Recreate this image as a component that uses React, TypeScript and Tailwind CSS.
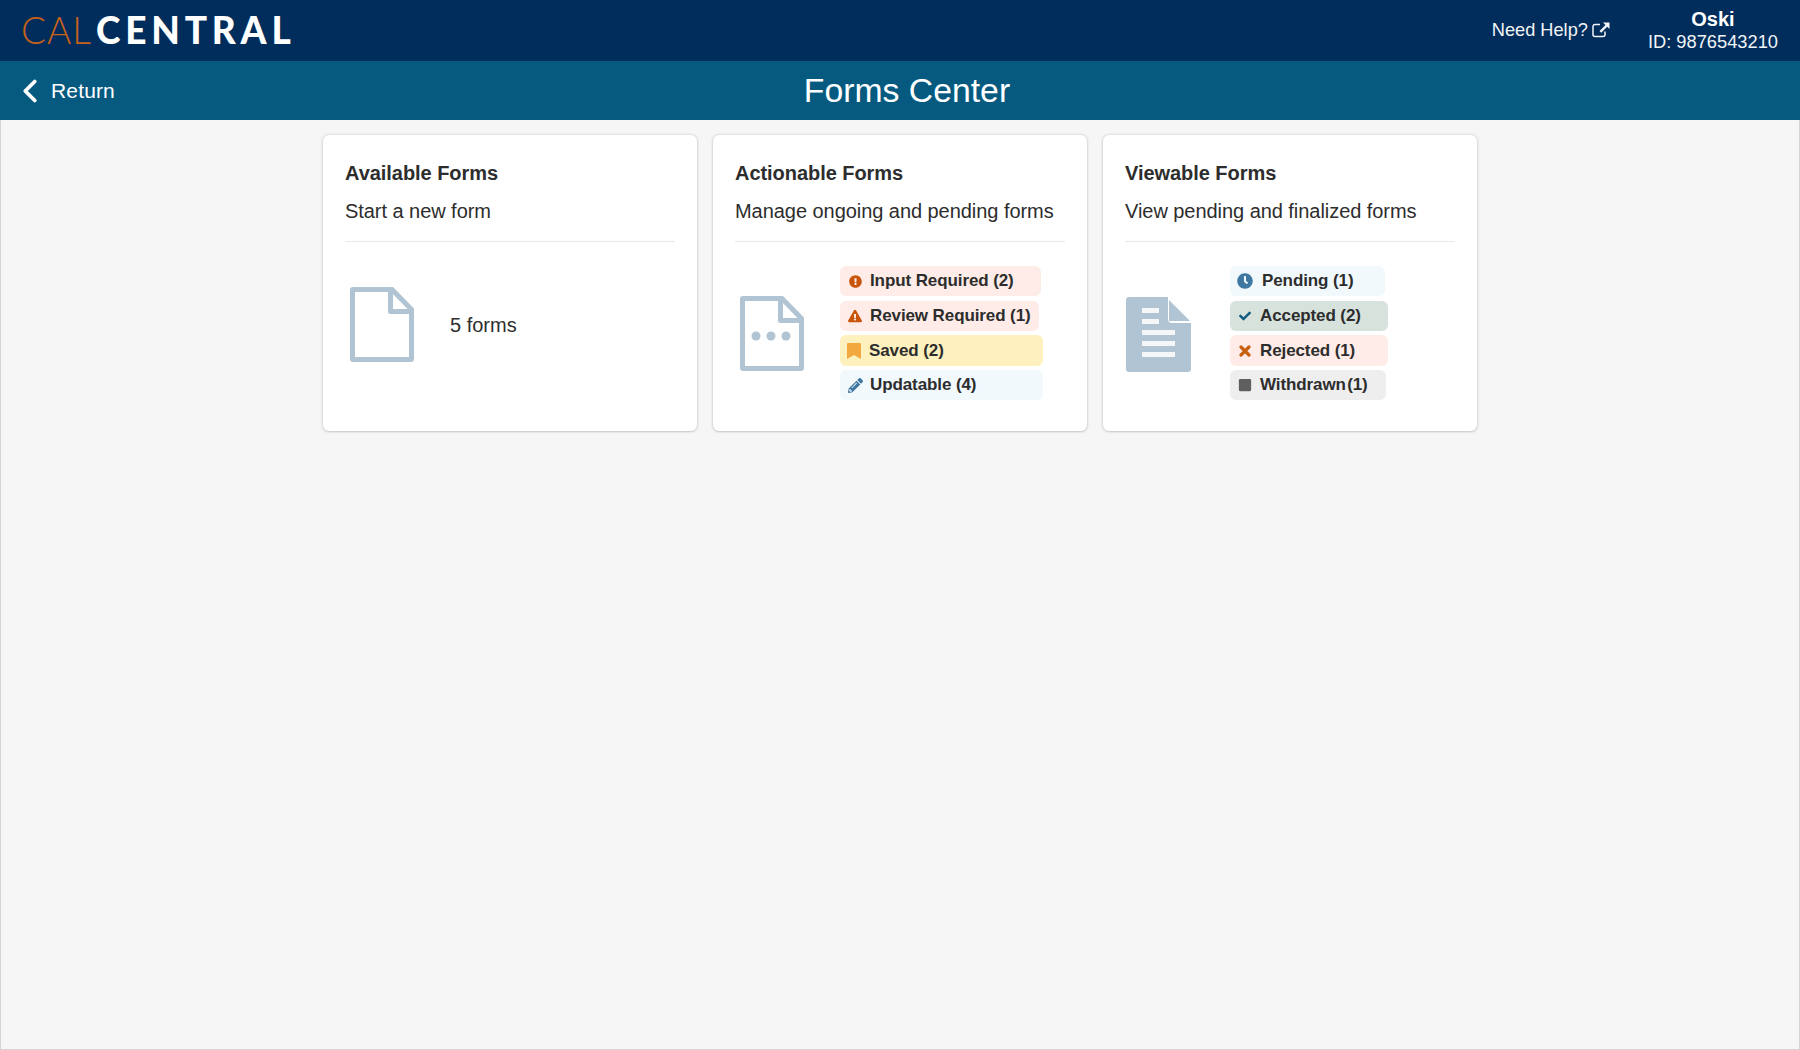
import { ChevronLeft } from "lucide-react";
import {
  FaCheck,
  FaClock,
  FaExclamationCircle,
  FaExclamationTriangle,
  FaPencilAlt,
  FaSquare,
} from "react-icons/fa";

function ExternalIcon() {
  return (
    <svg viewBox="0 0 18 16" className="ml-[4px] h-[16px] w-[18px]" aria-hidden="true">
      <path
        d="M13 9.5v3A2 2 0 0 1 11 14.500H3a2 2 0 0 1-2-2v-8a2 2 0 0 1 2-2h5"
        fill="none"
        stroke="currentColor"
        strokeWidth="1.5"
      />
      <path d="M11 0.500h6.500v6.500l-2.300-2.300-6 6-1.700-1.700 6-6z" fill="currentColor" />
    </svg>
  );
}

function BookmarkIcon() {
  return (
    <svg viewBox="0 0 14 16" className="h-[16px] w-[14px]" aria-hidden="true">
      <path d="M0 1a1 1 0 0 1 1-1h12a1 1 0 0 1 1 1v15l-7-4-7 4z" fill="#f3a73f" />
    </svg>
  );
}

function CrossIcon() {
  return (
    <svg viewBox="0 0 12 12" className="h-[12px] w-[12px]" aria-hidden="true">
      <path d="M2 2l8 8M10 2l-8 8" fill="none" stroke="#c8610f" strokeWidth="3.2" strokeLinecap="round" />
    </svg>
  );
}

function BlankFileIcon({ dots }: { dots?: boolean }) {
  return (
    <svg viewBox="0 0 64 75" className="h-[75px] w-[64px] shrink-0" aria-hidden="true">
      <path
        d="M3 2.500h39l19.500 20v49.500a.5.500 0 0 1-.5.500H3a.5.500 0 0 1-.5-.500V3a.5.500 0 0 1 .5-.500z"
        fill="none"
        stroke="#b1c4d3"
        strokeWidth="5"
        strokeLinejoin="round"
      />
      <path d="M40.500 3v21.500h21" fill="none" stroke="#b1c4d3" strokeWidth="5" strokeLinejoin="round" />
      {dots && (
        <g fill="#b1c4d3">
          <circle cx="16" cy="40" r="4.500" />
          <circle cx="31" cy="40" r="4.500" />
          <circle cx="46" cy="40" r="4.500" />
        </g>
      )}
    </svg>
  );
}

function SolidFileIcon() {
  return (
    <svg viewBox="0 0 65 75" className="h-[75px] w-[65px] shrink-0" aria-hidden="true">
      <path
        d="M3 0h39v22a4 4 0 0 0 4 4h19v46a3 3 0 0 1-3 3H3a3 3 0 0 1-3-3V3a3 3 0 0 1 3-3z"
        fill="#b1c4d3"
      />
      <path d="M43 3l21 21H43z" fill="#b1c4d3" />
      <g fill="#f4f6f7">
        <rect x="16" y="11" width="17" height="5" />
        <rect x="16" y="22" width="17" height="5" />
        <rect x="16" y="33" width="33" height="5" />
        <rect x="16" y="44" width="33" height="5" />
        <rect x="16" y="55" width="33" height="5" />
      </g>
    </svg>
  );
}

function Pill({
  className,
  icon,
  label,
}: {
  className: string;
  icon: React.ReactNode;
  label: string;
}) {
  return (
    <div
      className={`flex h-[30px] items-center rounded-[6px] text-[17px] font-bold tracking-[-0.1px] text-[#2d2d2d] ${className}`}
    >
      <span className="flex w-[30px] shrink-0 items-center justify-center">{icon}</span>
      <span className="whitespace-pre">{label}</span>
    </div>
  );
}

function Card({
  title,
  subtitle,
  children,
}: {
  title: string;
  subtitle: string;
  children: React.ReactNode;
}) {
  return (
    <div className="h-[296px] w-[374px] rounded-[6px] bg-white px-[22px] shadow-[0_0_3px_rgba(90,110,120,0.35),0_1px_2px_rgba(90,110,120,0.2)]">
      <div className="border-b border-[#e8e8e8] pb-[18px] pt-[26px]">
        <h2 className="text-[20px] font-bold leading-[24px] tracking-[-0.05px] text-[#2d2d2d]">{title}</h2>
        <p className="mt-[14px] text-[20px] leading-[24px] tracking-[-0.05px] text-[#2d2d2d]">{subtitle}</p>
      </div>
      {children}
    </div>
  );
}

export default function App() {
  return (
    <div className="flex h-[1050px] flex-col border-x border-b border-[#d5d5d5] bg-[#f6f6f6] font-['Liberation_Sans',Arial,sans-serif]">
      <header className="-mx-px flex h-[61px] shrink-0 items-center justify-between bg-[#002d5c] pl-[21px] pr-[22px] text-white">
        <div className="-mt-[3px] flex items-baseline font-['Lato',sans-serif] text-[37px] leading-none">
          <span className="font-light tracking-[1px] text-[#c8611a]">CAL</span>
          <span className="ml-[4px] font-black tracking-[4.800px]">CENTRAL</span>
        </div>
        <div className="flex items-center">
          <a className="flex items-center text-[18.200px] text-[#f2f4f6]">
            Need Help?
            <ExternalIcon />
          </a>
          <div className="ml-[38px] text-center text-[18.300px] leading-[23px]">
            <div className="text-[20px] font-bold">Oski</div>
            <div className="-mt-[1px] text-[#f2f4f6]">ID: 9876543210</div>
          </div>
        </div>
      </header>

      <div className="-mx-px grid h-[59px] shrink-0 grid-cols-[1fr_auto_1fr] items-center bg-[#065a7f] text-white">
        <div className="flex items-center pl-[11px]">
          <ChevronLeft size={38} strokeWidth={2.4} />
          <span className="ml-[2px] text-[21px] tracking-[0.15px]">Return</span>
        </div>
        <h1 className="pl-[14px] text-[33.750px] font-normal">Forms Center</h1>
        <div />
      </div>

      <main className="flex justify-center gap-[16px] pt-[15px]">
        <Card title="Available Forms" subtitle="Start a new form">
          <div className="flex items-center pl-[5px] pt-[45px]">
            <BlankFileIcon />
            <span className="ml-[36px] text-[20px] text-[#2d2d2d]">5 forms</span>
          </div>
        </Card>

        <Card title="Actionable Forms" subtitle="Manage ongoing and pending forms">
          <div className="flex items-center pl-[5px] pt-[24px]">
            <BlankFileIcon dots />
            <div className="ml-[36px] flex flex-col gap-[4px]">
              <Pill
                className="mb-[1px] w-[201px] bg-[#ffecE8]"
                icon={<FaExclamationCircle size={13} className="text-[#c8550a]" />}
                label="Input Required (2)"
              />
              <Pill
                className="w-[199px] bg-[#ffecE8]"
                icon={<FaExclamationTriangle size={14} className="text-[#c8550a]" />}
                label="Review Required (1)"
              />
              <Pill
                className="h-[31px] w-[203px] bg-[#fff1bd] [&>span:last-child]:-ml-[1px]"
                icon={
                  <span className="-ml-[3px] flex">
                    <BookmarkIcon />
                  </span>
                }
                label="Saved (2)"
              />
              <Pill
                className="w-[203px] bg-[#f1f9fd]"
                icon={<FaPencilAlt size={15} className="text-[#3f77a0]" />}
                label="Updatable (4)"
              />
            </div>
          </div>
        </Card>

        <Card title="Viewable Forms" subtitle="View pending and finalized forms">
          <div className="flex items-center pl-[1px] pt-[24px]">
            <div className="mt-[3px]">
              <SolidFileIcon />
            </div>
            <div className="ml-[39px] flex flex-col gap-[4px]">
              <Pill
                className="mb-[1px] w-[155px] bg-[#f1f9fd] [&>span:last-child]:ml-[2px]"
                icon={<FaClock size={16} className="text-[#3f77a0]" />}
                label="Pending (1)"
              />
              <Pill
                className="w-[158px] bg-[#d7e2dd]"
                icon={<FaCheck size={12} className="text-[#0f5a80]" />}
                label="Accepted (2)"
              />
              <Pill
                className="h-[31px] w-[158px] bg-[#ffecE8]"
                icon={<CrossIcon />}
                label="Rejected (1)"
              />
              <Pill
                className="w-[156px] bg-[#eeeeee]"
                icon={<FaSquare size={14} className="text-[#5f5f5f]" />}
                label={"Withdrawn\u200a(1)"}
              />
            </div>
          </div>
        </Card>
      </main>
    </div>
  );
}
